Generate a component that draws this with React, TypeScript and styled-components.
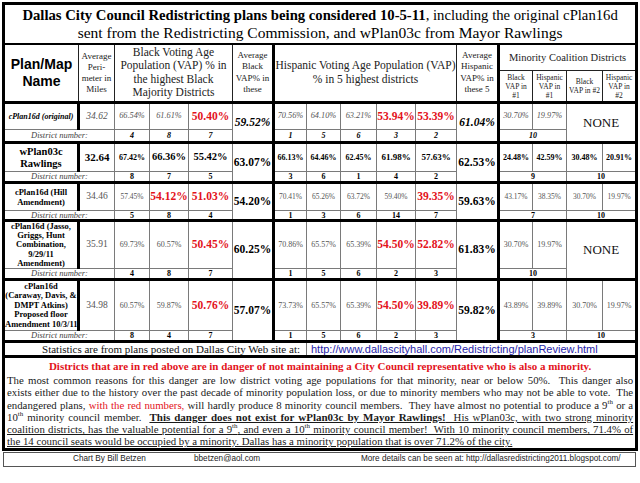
import React from "react";
import styled, { createGlobalStyle, css } from "styled-components";

const Global = createGlobalStyle`
  html, body { margin: 0; padding: 0; background: #fff; }
  body { font-family: "Liberation Serif", "Times New Roman", serif; color: #000; }
`;

const Page = styled.div`
  width: 640px;
  height: 483px;
  padding: 2px 0 0 2px;
  box-sizing: border-box;
  overflow: hidden;
`;

const Sheet = styled.table`
  width: 636px;
  border-collapse: collapse;
  table-layout: fixed;
  border: 3px solid #000;
`;

const Col = styled.col<{ $w: number; $thick?: boolean }>`
  width: ${(p) => p.$w}px;
  ${(p) => p.$thick && "border-left: 3px solid #000;"}
`;

const Row = styled.tr<{ $h: number }>`
  height: ${(p) => p.$h}px;
`;

const cellBase = css`
  border: 1px solid #7a7a7a;
  padding: 0;
  text-align: center;
  vertical-align: middle;
  white-space: nowrap;
`;

const TitleCell = styled.td`
  ${cellBase};
  border-bottom: 2px solid #000;
  font-size: 14.7px;
  line-height: 17px;
  padding-top: 1px;
`;

const TitleSecond = styled.span`
  font-size: 15.5px;
`;

const NameHead = styled.th`
  ${cellBase};
  border-color: #222;
  font-family: "Liberation Sans", Arial, sans-serif;
  font-weight: bold;
  font-size: 14px;
  line-height: 17px;
`;

const HeadCell = styled.th<{ $size: number; $lh: number }>`
  ${cellBase};
  border-color: #222;
  font-weight: normal;
  color: #222;
  font-size: ${(p) => p.$size}px;
  line-height: ${(p) => p.$lh}px;
`;

const PlanGroup = styled.tbody`
  border-top: 3px solid #000;
  border-bottom: 3px solid #000;
`;

const NameCell = styled.td<{ $size: number; $lh: number; $italic?: boolean }>`
  ${cellBase};
  border-left: 3px solid #000;
  border-right: 3px solid #000;
  font-weight: bold;
  font-size: ${(p) => p.$size}px;
  line-height: ${(p) => p.$lh}px;
  font-style: ${(p) => (p.$italic ? "italic" : "normal")};
`;

const Val = styled.td<{ $size: number; $bold?: boolean; $red?: boolean; $italic?: boolean; $gray?: boolean }>`
  ${cellBase};
  line-height: 1;
  font-size: ${(p) => p.$size}px;
  font-weight: ${(p) => (p.$bold || p.$red ? "bold" : "normal")};
  font-style: ${(p) => (p.$italic && !p.$red ? "italic" : "normal")};
  color: ${(p) => (p.$red ? "#e3121b" : p.$gray ? "#555" : "#000")};
`;

const DistLabel = styled.td`
  ${cellBase};
  font-style: italic;
  font-size: 8.5px;
  line-height: 7px;
  color: #444;
`;

const DistNum = styled.td<{ $italic?: boolean }>`
  ${cellBase};
  font-weight: bold;
  font-size: 8px;
  line-height: 7px;
  font-style: ${(p) => (p.$italic ? "italic" : "normal")};
`;

const NoneCell = styled.td`
  ${cellBase};
  font-size: 13px;
  color: #111;
`;

const StatsCell = styled.td`
  ${cellBase};
  border-top: 3px solid #000;
  border-bottom: 3px solid #000;
  text-align: right;
  padding-right: 6px;
  font-size: 11px;
  line-height: 11px;
  color: #111;
`;

const LinkCell = styled.td`
  ${cellBase};
  border-top: 3px solid #000;
  border-bottom: 3px solid #000;
  text-align: left;
  padding-left: 4px;
  font-family: "Liberation Sans", Arial, sans-serif;
  font-size: 11px;
  line-height: 11px;
  color: #1f23a8;
`;

const NoteCell = styled.td`
  ${cellBase};
  border: 3px solid #000;
  vertical-align: top;
  padding: 2px 2px 0 2px;
`;

const Warning = styled.div`
  color: #e3121b;
  font-weight: bold;
  font-size: 11px;
  text-align: center;
  line-height: 13px;
  margin-bottom: 1px;
`;

const Para = styled.div`
  font-size: 10.8px;
  line-height: 12.3px;
  color: #1a1a1a;
`;

const Line = styled.span<{ $last?: boolean }>`
  display: block;
  white-space: nowrap;
  text-align: ${(p) => (p.$last ? "left" : "justify")};
  text-align-last: ${(p) => (p.$last ? "left" : "justify")};
`;

const RedText = styled.span`
  color: #e3121b;
`;

const Strong = styled.span`
  text-decoration: underline;
`;

const Bold = styled.b`
  font-size: 11px;
`;

const Sup = styled.sup`
  font-size: 7px;
  line-height: 0;
`;

const Footer = styled.div`
  margin: 1px 0 0 1px;
  width: 633px;
  height: 15px;
  border: 1px solid #555;
  box-sizing: border-box;
  display: grid;
  grid-template-columns: 121px 167px 105px auto;
  padding-left: 69px;
  align-items: center;
  white-space: nowrap;
  font-family: "Liberation Sans", Arial, sans-serif;
  font-size: 8.2px;
  line-height: 10px;
  color: #222;
`;

type V = { t: string; s: number; b?: boolean; r?: boolean };
type Dist = { t: string; span?: number };
type Plan = {
  name: string[];
  nameSize: number;
  nameLh: number;
  italic?: boolean;
  gray: boolean;
  h: [number, number];
  perim: V;
  black: V[];
  avgB: V;
  hisp: V[];
  avgH: V;
  coal: V[];
  none?: boolean;
  dist: { black: string[]; hisp: string[]; coal: Dist[] };
};

const red = (t: string): V => ({ t, s: 11.5, r: true });
const avg = (t: string): V => ({ t, s: 11.5, b: true });

const plans: Plan[] = [
  {
    name: ["cPlan16d (original)"],
    nameSize: 8,
    nameLh: 10,
    italic: true,
    gray: true,
    h: [27, 13],
    perim: { t: "34.62", s: 9.5 },
    black: [{ t: "66.54%", s: 8.3 }, { t: "61.61%", s: 8.3 }, red("50.40%")],
    avgB: avg("59.52%"),
    hisp: [{ t: "70.56%", s: 8.3 }, { t: "64.10%", s: 8.3 }, { t: "63.21%", s: 8.3 }, red("53.94%"), red("53.39%")],
    avgH: avg("61.04%"),
    coal: [{ t: "30.70%", s: 8.3 }, { t: "19.97%", s: 8.3 }],
    none: true,
    dist: { black: ["4", "8", "7"], hisp: ["1", "5", "6", "3", "2"], coal: [{ t: "10", span: 2 }] },
  },
  {
    name: ["wPlan03c", "Rawlings"],
    nameSize: 10.5,
    nameLh: 12,
    gray: false,
    h: [29, 11],
    perim: { t: "32.64", s: 11, b: true },
    black: [{ t: "67.42%", s: 8, b: true }, { t: "66.36%", s: 10.5, b: true }, { t: "55.42%", s: 10.5, b: true }],
    avgB: avg("63.07%"),
    hisp: [
      { t: "66.13%", s: 8, b: true },
      { t: "64.46%", s: 8, b: true },
      { t: "62.45%", s: 8, b: true },
      { t: "61.98%", s: 9, b: true },
      { t: "57.63%", s: 9, b: true },
    ],
    avgH: avg("62.53%"),
    coal: [
      { t: "24.48%", s: 8, b: true },
      { t: "42.59%", s: 8, b: true },
      { t: "30.48%", s: 8, b: true },
      { t: "20.91%", s: 8, b: true },
    ],
    dist: { black: ["8", "7", "5"], hisp: ["3", "6", "1", "4", "2"], coal: [{ t: "9", span: 2 }, { t: "10", span: 2 }] },
  },
  {
    name: ["cPlan16d (Hill", "Amendment)"],
    nameSize: 8.5,
    nameLh: 10,
    gray: true,
    h: [28, 10],
    perim: { t: "34.46", s: 9.5 },
    black: [{ t: "57.45%", s: 7.5 }, red("54.12%"), red("51.03%")],
    avgB: avg("54.20%"),
    hisp: [{ t: "70.41%", s: 7.5 }, { t: "65.26%", s: 7.5 }, { t: "63.72%", s: 7.5 }, { t: "59.40%", s: 7.5 }, red("39.35%")],
    avgH: avg("59.63%"),
    coal: [{ t: "43.17%", s: 7.5 }, { t: "38.35%", s: 7.5 }, { t: "30.70%", s: 7.5 }, { t: "19.97%", s: 7.5 }],
    dist: { black: ["5", "8", "4"], hisp: ["1", "3", "6", "14", "7"], coal: [{ t: "7", span: 2 }, { t: "10", span: 2 }] },
  },
  {
    name: ["cPlan16d (Jasso,", "Griggs, Hunt", "Combination,", "9/29/11", "Amendment)"],
    nameSize: 8.5,
    nameLh: 9.1,
    gray: true,
    h: [48, 11],
    perim: { t: "35.91", s: 9.5 },
    black: [{ t: "69.73%", s: 8 }, { t: "60.57%", s: 8 }, red("50.45%")],
    avgB: avg("60.25%"),
    hisp: [{ t: "70.86%", s: 8 }, { t: "65.57%", s: 8 }, { t: "65.39%", s: 8 }, red("54.50%"), red("52.82%")],
    avgH: avg("61.83%"),
    coal: [{ t: "30.70%", s: 8 }, { t: "19.97%", s: 8 }],
    none: true,
    dist: { black: ["4", "8", "7"], hisp: ["1", "5", "6", "2", "3"], coal: [{ t: "10", span: 2 }] },
  },
  {
    name: ["cPlan16d", "(Caraway, Davis, &", "DMPT Atkins)", "Proposed floor", "Amendment 10/3/11"],
    nameSize: 8.5,
    nameLh: 9.5,
    gray: true,
    h: [51, 11],
    perim: { t: "34.98", s: 9.5 },
    black: [{ t: "60.57%", s: 8 }, { t: "59.87%", s: 8 }, red("50.76%")],
    avgB: avg("57.07%"),
    hisp: [{ t: "73.73%", s: 8 }, { t: "65.57%", s: 8 }, { t: "65.39%", s: 8 }, red("54.50%"), red("39.89%")],
    avgH: avg("59.82%"),
    coal: [{ t: "43.89%", s: 8 }, { t: "39.89%", s: 8 }, { t: "30.70%", s: 8 }, { t: "19.97%", s: 8 }],
    dist: { black: ["8", "4", "7"], hisp: ["1", "5", "6", "2", "3"], coal: [{ t: "3", span: 2 }, { t: "10", span: 2 }] },
  },
];

const widths = [75, 36, 35, 39, 44, 41, 33, 34, 36, 39, 41, 42, 34, 34, 36, 34];
const thickCols = new Set([6, 12]);

function ValueCell({ v, plan }: { v: V; plan: Plan }) {
  return (
    <Val $size={v.s} $bold={v.b} $red={v.r} $italic={plan.italic} $gray={plan.gray && !v.b}>
      {v.t}
    </Val>
  );
}

function PlanRows({ plan }: { plan: Plan }) {
  return (
    <PlanGroup>
      <Row $h={plan.h[0]}>
        <NameCell $size={plan.nameSize} $lh={plan.nameLh} $italic={plan.italic}>
          {plan.name.map((l, i) => (
            <React.Fragment key={i}>
              {i > 0 && <br />}
              {l}
            </React.Fragment>
          ))}
        </NameCell>
        <ValueCell v={plan.perim} plan={plan} />
        {plan.black.map((v, i) => (
          <ValueCell key={i} v={v} plan={plan} />
        ))}
        <Val rowSpan={2} $size={plan.avgB.s} $bold $italic={plan.italic}>
          {plan.avgB.t}
        </Val>
        {plan.hisp.map((v, i) => (
          <ValueCell key={i} v={v} plan={plan} />
        ))}
        <Val rowSpan={2} $size={plan.avgH.s} $bold $italic={plan.italic}>
          {plan.avgH.t}
        </Val>
        {plan.coal.map((v, i) => (
          <ValueCell key={i} v={v} plan={plan} />
        ))}
        {plan.none && (
          <NoneCell rowSpan={2} colSpan={2}>
            NONE
          </NoneCell>
        )}
      </Row>
      <Row $h={plan.h[1]}>
        <DistLabel colSpan={2}>District number:</DistLabel>
        {plan.dist.black.map((d, i) => (
          <DistNum key={i} $italic={plan.italic}>
            {d}
          </DistNum>
        ))}
        {plan.dist.hisp.map((d, i) => (
          <DistNum key={i} $italic={plan.italic}>
            {d}
          </DistNum>
        ))}
        {plan.dist.coal.map((d, i) => (
          <DistNum key={i} colSpan={d.span} $italic={plan.italic}>
            {d.t}
          </DistNum>
        ))}
      </Row>
    </PlanGroup>
  );
}

export default function App() {
  return (
    <Page>
      <Global />
      <Sheet>
        <colgroup>
          {widths.map((w, i) => (
            <Col key={i} $w={w} $thick={thickCols.has(i)} />
          ))}
        </colgroup>
        <thead>
          <Row $h={40}>
            <TitleCell colSpan={16}>
              <b>Dallas City Council Redistricting plans being considered 10-5-11</b>, including the original cPlan16d
              <br />
              <TitleSecond>sent from the Redistricting Commission, and wPlan03c from Mayor Rawlings</TitleSecond>
            </TitleCell>
          </Row>
          <Row $h={27}>
            <NameHead rowSpan={2}>
              Plan/Map
              <br />
              Name
            </NameHead>
            <HeadCell rowSpan={2} $size={9} $lh={11}>
              Average
              <br />
              Peri-
              <br />
              meter in
              <br />
              Miles
            </HeadCell>
            <HeadCell rowSpan={2} colSpan={3} $size={11.5} $lh={13.3}>
              Black Voting Age
              <br />
              Population (VAP) % in
              <br />
              the highest Black
              <br />
              Majority Districts
            </HeadCell>
            <HeadCell rowSpan={2} $size={9} $lh={11.5}>
              Average
              <br />
              Black
              <br />
              VAP% in
              <br />
              these
            </HeadCell>
            <HeadCell rowSpan={2} colSpan={5} $size={11.5} $lh={13.3}>
              Hispanic Voting Age Population (VAP)
              <br />% in 5 highest districts
            </HeadCell>
            <HeadCell rowSpan={2} $size={9} $lh={11.5}>
              Average
              <br />
              Hispanic
              <br />
              VAP% in
              <br />
              these 5
            </HeadCell>
            <HeadCell colSpan={4} $size={10.5} $lh={13}>
              Minority Coalition Districts
            </HeadCell>
          </Row>
          <Row $h={32}>
            <HeadCell $size={7.5} $lh={9}>
              Black
              <br />
              VAP in
              <br />
              #1
            </HeadCell>
            <HeadCell $size={7.5} $lh={9}>
              Hispanic
              <br />
              VAP in
              <br />
              #1
            </HeadCell>
            <HeadCell $size={7.5} $lh={9}>
              Black
              <br />
              VAP in #2
            </HeadCell>
            <HeadCell $size={7.5} $lh={9}>
              Hispanic
              <br />
              VAP in
              <br />
              #2
            </HeadCell>
          </Row>
        </thead>
        {plans.map((p, i) => (
          <PlanRows key={i} plan={p} />
        ))}
        <tbody>
          <Row $h={15}>
            <StatsCell colSpan={7}>Statistics are from plans posted on Dallas City Web site at:</StatsCell>
            <LinkCell colSpan={9}>http://www.dallascityhall.com/Redistricting/planReview.html</LinkCell>
          </Row>
          <Row $h={90}>
            <NoteCell colSpan={16}>
              <Warning>
                Districts that are in red above are in danger of not maintaining a City Council representative who is also a
                minority.
              </Warning>
              <Para>
                <Line>
                  The most common reasons for this danger are low district voting age populations for that minority, near or
                  below 50%.&nbsp; This danger also
                </Line>
                <Line>
                  exists either due to the history over the past decade of minority population loss, or due to minority
                  members who may not be able to vote.&nbsp; The
                </Line>
                <Line>
                  endangered plans, <RedText>with the red numbers,</RedText> will hardly produce 8 minority council
                  members.&nbsp; They have almost no potential to produce a 9<Sup>th</Sup> or a
                </Line>
                <Line>
                  10<Sup>th</Sup> minority council member.&nbsp;{" "}
                  <Strong>
                    <Bold>This danger does not exist for wPlan03c by Mayor Rawlings!</Bold>&nbsp; His wPlan03c, with two
                    strong minority
                  </Strong>
                </Line>
                <Line>
                  <Strong>
                    coalition districts, has the valuable potential for a 9<Sup>th</Sup>, and even a 10<Sup>th</Sup> minority
                    council member!&nbsp; With 10 minority council members, 71.4% of
                  </Strong>
                </Line>
                <Line $last>
                  <Strong>
                    the 14 council seats would be occupied by a minority. Dallas has a minority population that is over 71.2%
                    of the city.
                  </Strong>
                </Line>
              </Para>
            </NoteCell>
          </Row>
        </tbody>
      </Sheet>
      <Footer>
        <span>Chart By Bill Betzen</span>
        <span>bbetzen@aol.com</span>
        <span>More details can be seen at:</span>
        <span>http://dallasredistricting2011.blogspot.com/</span>
      </Footer>
    </Page>
  );
}
